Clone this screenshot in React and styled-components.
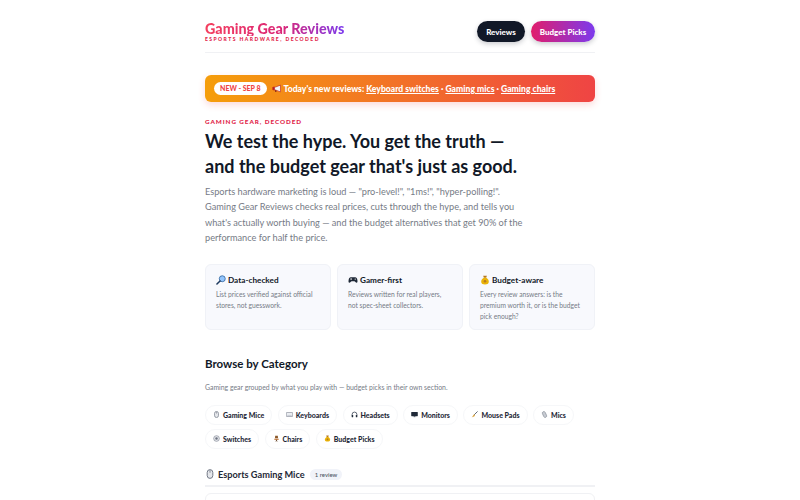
import React from "react";
import styled, { createGlobalStyle } from "styled-components";

const GlobalStyle = createGlobalStyle`
  html, body {
    margin: 0;
    height: 500px;
    overflow: hidden;
    background: #fff;
  }
  body {
    font-family: "Lato", "Liberation Sans", sans-serif;
    color: #111827;
  }
`;

const Page = styled.div`
  width: 390px;
  margin: 0 auto;
`;

const Header = styled.header`
  display: flex;
  justify-content: space-between;
  align-items: center;
  height: 41px;
  padding-top: 11px;
  border-bottom: 1px solid #f0f1f4;
`;

const Brand = styled.div`
  display: flex;
  flex-direction: column;
`;

const BrandName = styled.div`
  font-size: 14.3px;
  font-weight: 900;
  line-height: 15px;
  background: linear-gradient(90deg, #f43f5e 0%, #db2777 55%, #7c3aed 100%);
  -webkit-background-clip: text;
  background-clip: text;
  color: transparent;
`;

const BrandTag = styled.div`
  font-size: 5px;
  font-weight: 900;
  line-height: 6px;
  letter-spacing: 0.29em;
  color: #e11d48;
  text-transform: uppercase;
`;

const Nav = styled.nav`
  display: flex;
  gap: 6px;
`;

const NavButton = styled.a`
  display: flex;
  align-items: center;
  justify-content: center;
  width: ${(p) => p.$w}px;
  height: 21px;
  border-radius: 11px;
  font-size: 8px;
  font-weight: 900;
  color: #fff;
  background: ${(p) =>
    p.$accent ? "linear-gradient(90deg, #e11d6b, #7c3aed)" : "#111827"};
  box-shadow: 0 2px 5px rgba(17, 24, 39, 0.22);
`;

const Banner = styled.div`
  display: flex;
  align-items: center;
  gap: 5px;
  height: 27px;
  margin-top: 22px;
  padding: 0 9px;
  border-radius: 6px;
  background: linear-gradient(90deg, #f59e0b, #ef4444);
  box-shadow: 0 3px 7px rgba(239, 68, 68, 0.2);
  color: #fff;
  font-size: 8.6px;
  font-weight: 900;
  white-space: nowrap;
`;

const Badge = styled.span`
  padding: 0 6px;
  height: 13px;
  line-height: 13px;
  border-radius: 7px;
  background: #fff;
  color: #ef4444;
  font-size: 7px;
  font-weight: 900;
`;

const BannerLink = styled.a`
  text-decoration: underline;
`;

const BannerText = styled.span`
  display: flex;
  align-items: center;
  gap: 3px;
`;

const Eyebrow = styled.div`
  margin-top: 16px;
  font-size: 6.3px;
  line-height: 8px;
  font-weight: 900;
  letter-spacing: 0.15em;
  color: #e11d48;
`;

const Headline = styled.h1`
  margin: 3px 0 0;
  font-size: 18px;
  line-height: 25px;
  font-weight: 700;
  color: #111827;
`;

const Lead = styled.p`
  margin: 5px 0 0;
  width: 320px;
  font-size: 9.2px;
  line-height: 15.4px;
  color: #767b86;
`;

const Cards = styled.div`
  display: grid;
  grid-template-columns: repeat(3, 1fr);
  gap: 6px;
  margin-top: 18px;
`;

const Card = styled.div`
  height: 66px;
  box-sizing: border-box;
  padding: 9px 10px;
  border-radius: 6px;
  border: 1px solid #f0f2f7;
  background: #f8f9fd;
`;

const CardTitle = styled.div`
  display: flex;
  align-items: center;
  gap: 2px;
  font-size: 8.2px;
  line-height: 12px;
  font-weight: 700;
`;

const CardText = styled.div`
  margin-top: 3px;
  font-size: 6.7px;
  line-height: 11.4px;
  color: #767b86;
`;

const SectionTitle = styled.h2`
  margin: 26px 0 0;
  font-size: 11.5px;
  line-height: 15px;
  font-weight: 700;
`;

const SectionNote = styled.p`
  margin: 12px 0 0;
  font-size: 6.9px;
  line-height: 9px;
  color: #767b86;
`;

const Chips = styled.div`
  display: flex;
  flex-wrap: wrap;
  gap: 4px 5.5px;
  margin-top: 13px;
`;

const Chip = styled.a`
  display: flex;
  align-items: center;
  gap: 3px;
  height: 20px;
  box-sizing: border-box;
  padding: 0 7px;
  border-radius: 10px;
  border: 1px solid #f6f7f9;
  font-size: 7px;
  font-weight: 900;
  color: #1f2937;
`;

const GroupHead = styled.div`
  display: flex;
  align-items: center;
  gap: 5px;
  margin-top: 20px;
  padding-bottom: 5px;
  border-bottom: 2px solid #f0f1f4;
  font-size: 9.2px;
  font-weight: 700;
  color: #1f2937;
`;

const GroupName = styled.span`
  display: flex;
  align-items: center;
  gap: 3px;
`;

const Count = styled.span`
  padding: 0 5px;
  line-height: 11px;
  border-radius: 6px;
  background: #f1f3f9;
  font-size: 6px;
  font-weight: 500;
  color: #4b5563;
`;

const ReviewCard = styled.div`
  height: 40px;
  margin-top: 6px;
  border-radius: 6px;
  border: 1px solid #f0f1f4;
`;

const IconBox = styled.svg`
  flex: none;
  width: ${(p) => p.$size}px;
  height: ${(p) => p.$size}px;
`;

const drawings = {
  mouse: (
    <>
      <rect x="3.5" y="1" width="9" height="14" rx="4.5" fill="#e5e7eb" stroke="#6b7280" strokeWidth="1.5" />
      <path d="M8 2v4" stroke="#6b7280" strokeWidth="1.2" />
    </>
  ),
  keyboard: (
    <>
      <rect x="0.7" y="3.5" width="14.6" height="9" rx="1" fill="#eef0f4" stroke="#6b7280" strokeWidth="1.2" />
      <path d="M3 10h10" stroke="#9ca3af" strokeWidth="1" />
    </>
  ),
  headphones: (
    <>
      <path d="M2.5 10V8a5.5 5.5 0 0 1 11 0v2" fill="none" stroke="#374151" strokeWidth="1.8" />
      <rect x="1.5" y="9" width="3.5" height="5.5" rx="1.2" fill="#1f2937" />
      <rect x="11" y="9" width="3.5" height="5.5" rx="1.2" fill="#1f2937" />
    </>
  ),
  monitor: (
    <>
      <rect x="0.5" y="2" width="15" height="10" rx="1" fill="#1f2937" />
      <path d="M6 12h4v2H6z" fill="#4b5563" />
    </>
  ),
  brush: (
    <>
      <path d="M15 1 7 9" stroke="#374151" strokeWidth="1.8" />
      <path d="M7.500 7.500 9 9c0 3-3 5-7.500 5.500C4 13 4 10 7.500 7.500z" fill="#d9a441" />
    </>
  ),
  mic: (
    <rect x="4.5" y="1" width="7" height="14" rx="3.5" transform="rotate(-25 8 8)" fill="#c7cbd2" stroke="#6b7280" strokeWidth="1.1" />
  ),
  switch: (
    <>
      <circle cx="8" cy="8" r="6.5" fill="#e5e7eb" stroke="#6b7280" strokeWidth="1.2" />
      <circle cx="8" cy="8" r="2.8" fill="#6b7280" />
    </>
  ),
  chair: (
    <>
      <path d="M5 1.500h6l.5 6h-7z" fill="#8b5a2b" />
      <path d="M3 8.500h10V11H3z" fill="#c2702e" />
      <path d="M7 11h2v2l3 1.500H4L7 13z" fill="#5b3a1e" />
    </>
  ),
  bag: (
    <>
      <path d="M5 1h6L9.800 4.500H6.200z" fill="#b7791f" />
      <path d="M6 4.500h4c3 2 4.500 4.500 4 7-.4 2.400-2.600 3.500-6 3.500s-5.600-1.100-6-3.500c-.5-2.500 1-5 4-7z" fill="#eab308" />
      <circle cx="8" cy="10" r="2" fill="#b7791f" />
    </>
  ),
  magnifier: (
    <>
      <circle cx="10" cy="6" r="4.800" fill="#93c5fd" stroke="#3b6ea5" strokeWidth="1.400" />
      <path d="M6.500 9.500 1.500 14.500" stroke="#1e3a5f" strokeWidth="2.400" strokeLinecap="round" />
    </>
  ),
  gamepad: (
    <>
      <path d="M4.500 3.500h7c2 0 3 1.500 3.500 4.500.4 2.600.2 4.500-1.200 4.500-1.600 0-2.300-2.500-3.800-2.500H6c-1.500 0-2.200 2.500-3.800 2.500C.8 12.500.6 10.600 1 8c.5-3 1.500-4.500 3.500-4.500z" fill="#1f2937" />
      <circle cx="11.500" cy="6.500" r="1" fill="#fff" />
      <path d="M3.500 6.500h3M5 5v3" stroke="#fff" strokeWidth="0.9" />
    </>
  ),
  megaphone: (
    <>
      <path d="M15 2 6 5.500H2v5h4L15 14z" fill="#f3f4f6" stroke="#b91c1c" strokeWidth="1.100" />
      <path d="M1 5.500h4v5H1z" fill="#b91c1c" />
      <path d="M5 11h2.500l.5 3H6z" fill="#7f1d1d" />
    </>
  ),
};

const Icon = ({ name, size = 7 }) => (
  <IconBox $size={size} viewBox="0 0 16 16" aria-hidden="true">
    {drawings[name]}
  </IconBox>
);

const cards = [
  { icon: "magnifier", title: "Data-checked", text: "List prices verified against official stores, not guesswork." },
  { icon: "gamepad", title: "Gamer-first", text: "Reviews written for real players, not spec-sheet collectors." },
  { icon: "bag", title: "Budget-aware", text: "Every review answers: is the premium worth it, or is the budget pick enough?" },
];

const chips = [
  { icon: "mouse", label: "Gaming Mice" },
  { icon: "keyboard", label: "Keyboards" },
  { icon: "headphones", label: "Headsets" },
  { icon: "monitor", label: "Monitors" },
  { icon: "brush", label: "Mouse Pads" },
  { icon: "mic", label: "Mics" },
  { icon: "switch", label: "Switches" },
  { icon: "chair", label: "Chairs" },
  { icon: "bag", label: "Budget Picks" },
];

const App = () => {
  return (
    <Page>
      <GlobalStyle />
      <Header>
        <Brand>
          <BrandName>Gaming Gear Reviews</BrandName>
          <BrandTag>Esports hardware, decoded</BrandTag>
        </Brand>
        <Nav>
          <NavButton $w={48}>Reviews</NavButton>
          <NavButton $w={64} $accent>Budget Picks</NavButton>
        </Nav>
      </Header>
      <Banner>
        <Badge>NEW - SEP 8</Badge>
        <BannerText>
          <Icon name="megaphone" size={9} />
          <span>
            Today's new reviews: <BannerLink>Keyboard switches</BannerLink> ·{" "}
            <BannerLink>Gaming mics</BannerLink> · <BannerLink>Gaming chairs</BannerLink>
          </span>
        </BannerText>
      </Banner>
      <Eyebrow>GAMING GEAR, DECODED</Eyebrow>
      <Headline>
        We test the hype. You get the truth —
        <br />
        and the budget gear that's just as good.
      </Headline>
      <Lead>
        Esports hardware marketing is loud — "pro-level!", "1ms!", "hyper-polling!".
        Gaming Gear Reviews checks real prices, cuts through the hype, and tells you
        what's actually worth buying — and the budget alternatives that get 90% of the
        performance for half the price.
      </Lead>
      <Cards>
        {cards.map((c) => (
          <Card key={c.title}>
            <CardTitle>
              <Icon name={c.icon} size={10} />
              {c.title}
            </CardTitle>
            <CardText>{c.text}</CardText>
          </Card>
        ))}
      </Cards>
      <SectionTitle>Browse by Category</SectionTitle>
      <SectionNote>
        Gaming gear grouped by what you play with — budget picks in their own section.
      </SectionNote>
      <Chips>
        {chips.map((c) => (
          <Chip key={c.label}>
            <Icon name={c.icon} />
            {c.label}
          </Chip>
        ))}
      </Chips>
      <GroupHead>
        <GroupName>
          <Icon name="mouse" size={10} />
          Esports Gaming Mice
        </GroupName>
        <Count>1 review</Count>
      </GroupHead>
      <ReviewCard />
    </Page>
  );
};

export default App;
